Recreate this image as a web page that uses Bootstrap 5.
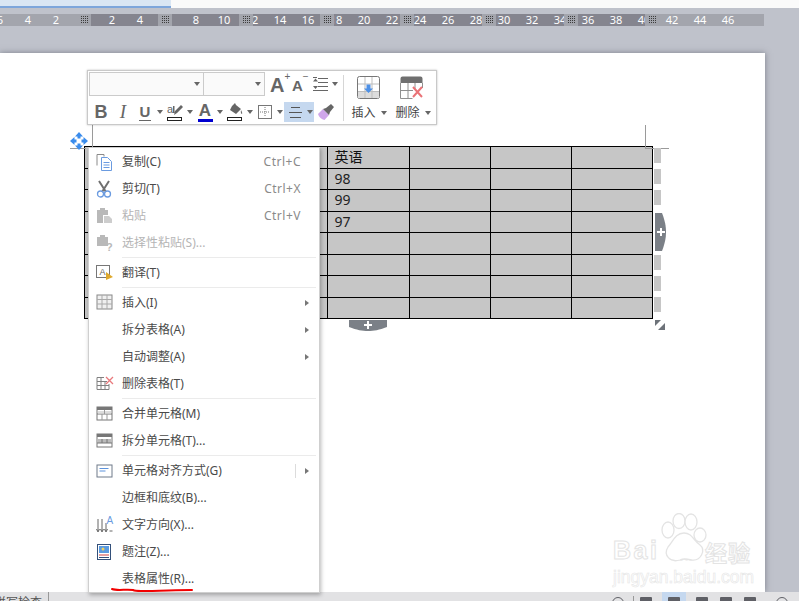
<!DOCTYPE html>
<html lang="zh">
<head>
  <meta charset="UTF-8">
  <title>表格属性</title>
  <link href="https://cdn.jsdelivr.net/npm/bootstrap@5.3.0/dist/css/bootstrap.min.css" rel="stylesheet">
  <style>
    html, body { height: 601px; overflow: hidden; }
    body { background: #bfc2cb; font-family: "Noto Sans", "Noto Sans CJK SC", sans-serif; font-size: 12px; color: #444; }
    .shell { width: 799px; height: 601px; position: relative; overflow: hidden; }

    .tab-strip { height: 8px; background: #fafafa; }
    .doc-tab { width: 171px; height: 8px; background: #dae6f3; border-bottom: 2px solid #7ea6db; }

    .ruler { height: 12px; width: 764px; margin-top: 6px; position: relative; background: #a3a5ad; }
    .ruler-seg { height: 12px; }
    .seg-dark { background: #85858f; }
    .ruler-dots { width: 14px; height: 12px; background: #a3a5ad; position: relative; z-index: 2; display: flex; align-items: center; justify-content: center; }
    .ruler-dots i { display: block; width: 8px; height: 8px; background: conic-gradient(#3c3c3c 25%, transparent 0) 0 0 / 2px 2px; }
    .ruler-nums { position: absolute; left: -14px; top: 0; height: 12px; z-index: 1; color: #fff; font: 11px/12px "Noto Sans", sans-serif; }
    .ruler-nums span { width: 28px; text-align: center; flex: none; }

    .doc-area { flex: 1 1 auto; min-height: 0; padding-top: 27px; padding-right: 34px; }
    .doc-page { height: 100%; background: #fff; box-shadow: 0 0 6px rgba(70,72,85,.55); padding: 93px 0 0 84px; }

    .doc-grid { width: 569px; margin: 0; table-layout: fixed; --bs-table-bg: #c6c6c6; --bs-table-border-color: #000; --bs-border-width: 1px; font: 14px/19px "Noto Sans", "Noto Sans CJK SC", sans-serif; color: #222; }
    .doc-grid td { padding: 0 0 0 6px; height: 21.5px; vertical-align: top; }
    .doc-grid tr:first-child td { border-top-color: #777; color: #111; }

    .status-bar { height: 9px; background: #e2e2e4; overflow: hidden; flex: none; }
    .status-text { margin-left: -6px; padding-top: 3px; width: 55px; line-height: 16px; color: #555; border-right: 1px solid #999; white-space: nowrap; }
    .status-icons { margin-left: auto; padding-right: 5px; }
    .status-cell { width: 24px; height: 9px; display: flex; justify-content: center; padding-top: 5px; }
    .status-cell.is-on { background: #c5d8ef; }
    .status-cell.pushed { margin-left: 4px; }
    .status-cell.pushed-far { margin-left: 8px; }
    .status-cell b { display: block; width: 12px; height: 10px; background: #5f6066; border-radius: 1px; }
    .status-cell b.round { width: 12px; height: 12px; border-radius: 50%; background: none; border: 1.5px solid #5f6066; }
    .status-sep { width: 1px; height: 5px; margin: 4px 0 0 3px; background: #999; }

    .float-bar { position: absolute; left: 87px; top: 70px; width: 350px; height: 55px; background: #fff; border: 1px solid #c9c9c9; box-shadow: 0 0 2px rgba(0,0,0,.25); padding: 1px; display: flex; z-index: 5; }
    .bar-left { width: 250px; flex: none; }
    .font-box { height: 24px; border: 1px solid #cbcbcb; background: #fafafa; display: flex; align-items: center; justify-content: flex-end; padding-right: 3px; }
    .font-name { width: 117px; }
    .font-size { width: 62px; border-left: 0; }
    .down-tri { display: block; width: 0; height: 0; border-left: 3.5px solid transparent; border-right: 3.5px solid transparent; border-top: 4px solid #666; flex: none; }
    .bar-cell { width: 22px; height: 20px; display: flex; align-items: center; justify-content: center; flex: none; color: #666; }
    .tri-cell { width: 8px; height: 20px; display: flex; align-items: center; justify-content: center; flex: none; }
    .bar-on { background: #c5d8ef; }
    .tool-row { margin-top: 6px; margin-left: 1px; }
    .glyph-b { font: bold 18px/20px "Liberation Sans", sans-serif; }
    .glyph-i { font: italic 19px/20px "Liberation Serif", serif; }
    .glyph-u { font: bold 15px/16px "Liberation Sans", sans-serif; border-bottom: 1px solid #666; height: 17px; padding: 0 1px; }
    .glyph-a { font: bold 17px/17px "Liberation Sans", sans-serif; }
    .size-up, .size-down { height: 24px; display: flex; color: #666; font-family: "Liberation Sans", sans-serif; font-weight: bold; flex: none; }
    .size-up { width: 24px; padding-left: 5px; font-size: 20px; line-height: 27px; }
    .size-down { width: 20px; padding-left: 3px; font-size: 15px; line-height: 28px; }
    .size-up small, .size-down small { font-size: 10px; line-height: 10px; font-weight: normal; }
    .bar-line { width: 1px; height: 46px; background: #d6d6d6; margin: 3px 2px 0 4px; flex: none; }
    .bar-big { width: 44px; flex: none; display: flex; flex-direction: column; align-items: center; padding-top: 4px; }
    .bar-big .big-label { display: flex; align-items: center; gap: 5px; margin-top: 5px; padding-left: 2px; line-height: 18px; color: #444; }

    .ctx-menu.dropdown-menu { position: absolute; left: 88px; top: 147px; width: 232px; height: 446px; padding: 0; margin: 0; border: 1px solid #cfcfcf; border-radius: 0; box-shadow: 1px 2px 4px rgba(0,0,0,.28); background: #fff; font-size: 12px; z-index: 4; }
    .ctx-menu .dropdown-item { height: 27px; padding: 0 4px 0 7px; display: flex; align-items: center; color: #4a4a4a; font-size: 12px; line-height: 16px; }
    .ctx-menu .dropdown-item.disabled { color: #b5b5b5; }
    .ctx-menu .dropdown-divider { height: 1px; margin: 1px 3px 1px 33px; border-top: 1px solid #ebebeb; opacity: 1; }
    .item-icon { width: 18px; height: 18px; flex: none; margin-right: 8px; display: block; }
    .item-keys { margin-left: auto; margin-right: 14px; color: #8a8a8a; font-size: 12px; letter-spacing: .5px; }
    .item-more { margin-left: auto; width: 0; height: 0; border-top: 3.5px solid transparent; border-bottom: 3.5px solid transparent; border-left: 4px solid #777; margin-right: 6px; }
    .item-rule { margin-left: auto; margin-right: 9px; width: 1px; height: 14px; background: #dcdcdc; }
    .item-rule + .item-more { margin-left: 0; }

    .grip-col { position: absolute; left: 654px; top: 148px; width: 7px; height: 166px; gap: 6px; z-index: 2; }
    .grip-col i { display: block; width: 7px; height: 15px; background: #c6c6c6; flex: none; }
    .grip-col .grip-gap { background: transparent; height: 38px; }
    .over-svg { position: absolute; z-index: 3; display: block; }
    .mark-line { position: absolute; background: #9a9a9a; z-index: 2; }

    .wm-box { position: absolute; left: 610px; top: 512px; width: 150px; height: 76px; z-index: 1; }
    .wm-bai, .wm-cn, .wm-du, .wm-url { position: absolute; color: #fff; white-space: nowrap; }
    .wm-bai { left: 3px; top: 23px; font: bold 25px/30px "Liberation Sans", sans-serif; letter-spacing: 2.5px; -webkit-text-stroke: 1px #e4e4e4; }
    .wm-du { left: 64px; top: 33px; font: bold 15px/20px "Liberation Sans", sans-serif; -webkit-text-stroke: 1px #e4e4e4; }
    .wm-cn { left: 95px; top: 24px; font: bold 22px/30px "Noto Sans CJK SC", sans-serif; letter-spacing: 1px; -webkit-text-stroke: 1px #e4e4e4; }
    .wm-url { left: 3px; top: 54px; font: 17.5px/22px "Liberation Sans", sans-serif; -webkit-text-stroke: .6px #e6e6e6; }
  </style>
</head>
<body>
<div class="shell d-flex flex-column">
  <div class="tab-strip"><div class="doc-tab"></div></div>

  <div class="ruler">
    <div class="d-flex">
      <div class="ruler-seg" style="width:77px"></div><div class="ruler-dots"><i></i></div>
      <div class="ruler-seg seg-dark" style="width:67px"></div><div class="ruler-dots"><i></i></div>
      <div class="ruler-seg seg-dark" style="width:67px"></div><div class="ruler-dots"><i></i></div>
      <div class="ruler-seg seg-dark" style="width:67px"></div><div class="ruler-dots"><i></i></div>
      <div class="ruler-seg seg-dark" style="width:66px"></div><div class="ruler-dots"><i></i></div>
      <div class="ruler-seg seg-dark" style="width:68px"></div><div class="ruler-dots"><i></i></div>
      <div class="ruler-seg seg-dark" style="width:68px"></div><div class="ruler-dots"><i></i></div>
      <div class="ruler-seg seg-dark" style="width:67px"></div><div class="ruler-dots"><i></i></div>
    </div>
    <div class="ruler-nums d-flex">
      <span>6</span><span>4</span><span>2</span><span></span><span>2</span><span>4</span><span></span><span>8</span><span>10</span><span>12</span><span>14</span><span>16</span><span>18</span><span>20</span><span>22</span><span>24</span><span>26</span><span>28</span><span>30</span><span>32</span><span>34</span><span>36</span><span>38</span><span>40</span><span>42</span><span>44</span><span>46</span>
    </div>
  </div>

  <div class="doc-area">
    <div class="doc-page">
      <table class="table table-bordered doc-grid">
        <tbody>
          <tr><td></td><td></td><td></td><td>英语</td><td></td><td></td><td></td></tr>
          <tr><td></td><td></td><td></td><td>98</td><td></td><td></td><td></td></tr>
          <tr><td></td><td></td><td></td><td>99</td><td></td><td></td><td></td></tr>
          <tr><td></td><td></td><td></td><td>97</td><td></td><td></td><td></td></tr>
          <tr><td></td><td></td><td></td><td></td><td></td><td></td><td></td></tr>
          <tr><td></td><td></td><td></td><td></td><td></td><td></td><td></td></tr>
          <tr><td></td><td></td><td></td><td></td><td></td><td></td><td></td></tr>
          <tr><td></td><td></td><td></td><td></td><td></td><td></td><td></td></tr>
        </tbody>
      </table>
    </div>
  </div>

  <div class="status-bar d-flex">
    <div class="status-text">拼写检查</div>
    <div class="status-icons d-flex">
      <div class="status-cell"><b class="round"></b></div>
      <div class="status-sep"></div>
      <div class="status-cell"><b></b></div>
      <div class="status-cell pushed is-on"><b></b></div>
      <div class="status-cell pushed"><b></b></div>
      <div class="status-cell"><b></b></div>
      <div class="status-cell"><b></b></div>
      <div class="status-cell pushed-far"><b class="round"></b></div>
    </div>
  </div>

  <!-- 文档上的标记 -->
  <div class="mark-line" style="left:70px;top:148px;width:16px;height:1px"></div>
  <div class="mark-line" style="left:92px;top:125px;width:1px;height:22px"></div>
  <div class="mark-line" style="left:645px;top:125px;width:1px;height:23px"></div>
  <div class="mark-line" style="left:645px;top:148px;width:24px;height:1px"></div>

  <svg class="over-svg" style="left:70px;top:132px" width="18" height="18" viewBox="0 0 18 18" fill="#3a8cec">
    <path d="M9 0l4 4.500h-2.500v2h-3v-2H5zM9 18l-4-4.500h2.500v-2h3v2H13zM0 9l4.500-4v2.500h2v3h-2V13zM18 9l-4.500 4v-2.500h-2v-3h2V5z"/>
  </svg>

  <div class="grip-col d-flex flex-column">
    <i></i><i></i><i></i><i class="grip-gap"></i><i></i><i></i><i></i>
  </div>
  <svg class="over-svg" style="left:655px;top:213px" width="12" height="38" viewBox="0 0 12 38">
    <path d="M0 0h7c3 8 4 13 4 19s-1 11-4 19H0z" fill="#7b8087"/>
    <path d="M5 15h2v3h3v2H7v3H5v-3H2v-2h3z" fill="#fff"/>
  </svg>
  <svg class="over-svg" style="left:349px;top:320px" width="38" height="12" viewBox="0 0 38 12">
    <path d="M0 0h38v7c-8 3-13 4-19 4S8 10 0 7z" fill="#7b8087"/>
    <path d="M18 1h2v3h3v2h-3v3h-2V6h-3V4h3z" fill="#fff"/>
  </svg>
  <svg class="over-svg" style="left:655px;top:320px" width="10" height="10" viewBox="0 0 10 10">
    <path d="M0 0h6L0 6z" fill="#6d7279"/><path d="M10 3v7H3z" fill="#6d7279"/>
  </svg>

  <!-- 百度经验水印 -->
  <div class="wm-box">
    <svg class="over-svg" style="left:50px;top:1px" width="48" height="50" viewBox="0 0 48 50" fill="#fff" stroke="#e4e4e4" stroke-width="1.300">
      <ellipse cx="8" cy="17" rx="6" ry="8"/><ellipse cx="19" cy="8" rx="6" ry="7.500"/><ellipse cx="31" cy="9" rx="6" ry="8"/><ellipse cx="40" cy="22" rx="6" ry="7"/>
      <path d="M24 20c8 0 9 7 16 12 6 5 1 16-8 15-5-1-8-2-12 0-10 3-17-5-12-13 5-5 7-14 16-14z"/>
    </svg>
    <span class="wm-bai">Bai</span>
    <span class="wm-du">du</span>
    <span class="wm-cn">经验</span>
    <span class="wm-url">jingyan.baidu.com</span>
  </div>

  <!-- 浮动工具栏 -->
  <div class="float-bar">
    <div class="bar-left">
      <div class="d-flex">
        <div class="font-box font-name"><span class="down-tri"></span></div>
        <div class="font-box font-size"><span class="down-tri"></span></div>
        <div class="size-up"><span>A</span><small>+</small></div>
        <div class="size-down"><span>A</span><small>−</small></div>
        <div class="bar-cell" style="height:24px">
          <svg width="15" height="14" viewBox="0 0 15 14" stroke="#666" fill="#666"><path d="M5 1.500h10M5 5.500h10M5 9.500h10M0 13.500h15M0 .5h4" fill="none"/><path d="M2.500 1.500l2.500 3H0zM2.500 12l2.500-3H0z" stroke="none"/></svg>
        </div>
        <div class="tri-cell" style="height:24px"><span class="down-tri"></span></div>
      </div>
      <div class="d-flex align-items-center tool-row">
        <div class="bar-cell glyph-b">B</div>
        <div class="bar-cell glyph-i">I</div>
        <div class="bar-cell"><span class="glyph-u">U</span></div><div class="tri-cell"><span class="down-tri"></span></div>
        <div class="bar-cell">
          <svg width="16" height="18" viewBox="0 0 16 18"><text x="0" y="10" font-size="11" fill="#666" font-family="Liberation Sans">a</text><path d="M6 3h1.500v7H6zM7 12l1-4 6-6 2 2-6 6z" fill="#666"/><rect x=".5" y="14.500" width="14" height="3" fill="#fff" stroke="#222"/></svg>
        </div><div class="tri-cell"><span class="down-tri"></span></div>
        <div class="bar-cell">
          <div class="d-flex flex-column align-items-center"><span class="glyph-a">A</span><svg class="d-block" width="15" height="3"><rect width="15" height="3" fill="#0000d0"/></svg></div>
        </div><div class="tri-cell"><span class="down-tri"></span></div>
        <div class="bar-cell">
          <svg width="16" height="18" viewBox="0 0 16 18"><path d="M8 0l1 2 5 4-5 5-6-4 2-4z" fill="#666"/><path d="M14 7c1 2 1.500 3 1 4-1 0-1.500-2-1-4z" fill="#666"/><rect x=".5" y="14.500" width="14" height="3" fill="#fff" stroke="#222"/></svg>
        </div><div class="tri-cell"><span class="down-tri"></span></div>
        <div class="bar-cell">
          <svg width="14" height="14" viewBox="0 0 14 14" fill="none" stroke="#777"><rect x=".5" y=".5" width="13" height="13"/><path d="M7 2v10M2 7h10" stroke-dasharray="1 1"/></svg>
        </div><div class="tri-cell"><span class="down-tri"></span></div>
        <div class="bar-cell bar-on">
          <svg width="13" height="11" viewBox="0 0 13 11" stroke="#555"><path d="M2 .5h9M0 5.500h13M1 10.500h11"/></svg>
        </div><div class="tri-cell bar-on"><span class="down-tri"></span></div>
        <div class="bar-cell">
          <svg width="17" height="17" viewBox="0 0 17 17"><path d="M1 10l5-5 6 6-4.500 5c-3-.5-5.500-3-6.500-6z" fill="#cfa6ea"/><path d="M6 5l3-1 5-4 3 3-4 5-1 3z" fill="#666"/></svg>
        </div>
      </div>
    </div>
    <div class="bar-line"></div>
    <div class="bar-big">
      <svg width="23" height="23" viewBox="0 0 23 23" fill="none"><rect x=".5" y=".5" width="22" height="22" rx="2" stroke="#777"/><rect x="1" y="16" width="21" height="6" fill="#dcdcdc"/><path d="M1 8h21M1 15.500h21M8 1v21M15 1v21" stroke="#bdbdbd"/><path d="M9.500 8.500h4v4h2.500l-4.500 4.500-4.500-4.500h2.500z" fill="#4d90e6"/></svg>
      <div class="big-label">插入<span class="down-tri"></span></div>
    </div>
    <div class="bar-big">
      <svg width="24" height="23" viewBox="0 0 24 23" fill="none"><path d="M.5 7V2.500a2 2 0 0 1 2-2h18a2 2 0 0 1 2 2V7z" fill="#6f6f6f"/><path d="M.5 7v15.500h12M22.500 7v5M1 14.500h12M8 7v15M15 7v6" stroke="#909090"/><path d="M13 11l9 10M22 11l-9 10" stroke="#ea7377" stroke-width="2"/></svg>
      <div class="big-label">删除<span class="down-tri"></span></div>
    </div>
  </div>

  <!-- 右键菜单 -->
  <div class="dropdown-menu d-block ctx-menu">
    <a class="dropdown-item" href="#">
      <svg class="item-icon" viewBox="0 0 18 18" fill="none"><path d="M1 12.500V1.500h7v2" stroke="#8a8a8a"/><path d="M5.500 4.500h6l4 4v9h-10z" fill="#fff" stroke="#6b9be0"/><path d="M7.500 9.500h6M7.500 12h6M7.500 14.500h6" stroke="#6b9be0"/></svg>
      复制(C)<span class="item-keys">Ctrl+C</span>
    </a>
    <a class="dropdown-item" href="#">
      <svg class="item-icon" viewBox="0 0 18 18" fill="none"><path d="M3 1l7 11M13 1L6 12" stroke="#6f6f6f" stroke-width="2"/><circle cx="4.500" cy="14" r="3" stroke="#6b9be0" stroke-width="1.300"/><circle cx="11.500" cy="14" r="3" stroke="#6b9be0" stroke-width="1.300"/></svg>
      剪切(T)<span class="item-keys">Ctrl+X</span>
    </a>
    <a class="dropdown-item disabled" href="#">
      <svg class="item-icon" viewBox="0 0 18 18"><path d="M1 3h3V1h5v2h3v5H7v8H1z" fill="#b9b9b9"/><path d="M8 9h5l3 3v4H8z" fill="#cdcdcd"/></svg>
      粘贴<span class="item-keys">Ctrl+V</span>
    </a>
    <a class="dropdown-item disabled" href="#">
      <svg class="item-icon" viewBox="0 0 18 18"><path d="M1 3h3V1h5v2h3v9H1z" fill="#b9b9b9"/><text x="10" y="17" font-size="11" font-weight="bold" fill="#b9b9b9" font-family="Liberation Sans">?</text></svg>
      选择性粘贴(S)...
    </a>
    <div class="dropdown-divider"></div>
    <a class="dropdown-item" href="#">
      <svg class="item-icon" viewBox="0 0 18 18" fill="none"><rect x=".5" y="1.500" width="13" height="12" stroke="#777"/><text x="3.500" y="11" font-size="9" fill="#666" font-family="Liberation Sans">A</text><path d="M10 8l7 5-7 3z" fill="#dfa92e"/></svg>
      翻译(T)
    </a>
    <div class="dropdown-divider"></div>
    <a class="dropdown-item" href="#">
      <svg class="item-icon" viewBox="0 0 18 18" fill="none"><rect x="1" y="1" width="15" height="14" fill="#f0f0f0" stroke="#888"/><path d="M1 5.500h15M1 10h15M6 1v14M11 1v14" stroke="#aaa"/></svg>
      插入(I)<span class="item-more"></span>
    </a>
    <a class="dropdown-item" href="#"><span class="item-icon"></span>拆分表格(A)<span class="item-more"></span></a>
    <a class="dropdown-item" href="#"><span class="item-icon"></span>自动调整(A)<span class="item-more"></span></a>
    <a class="dropdown-item" href="#">
      <svg class="item-icon" viewBox="0 0 18 18" fill="none"><path d="M8 2.500H1v12h12V9M1 6.500h10M1 10.500h12M5 2.500v12M9 6v8.500" stroke="#808080"/><path d="M10 2l7 7M17 2l-7 7" stroke="#e8797c" stroke-width="1.300"/></svg>
      删除表格(T)
    </a>
    <div class="dropdown-divider"></div>
    <a class="dropdown-item" href="#">
      <svg class="item-icon" viewBox="0 0 18 18" fill="none"><rect x="1" y="2" width="15" height="13" fill="#fff" stroke="#777"/><rect x="1" y="2" width="15" height="3" fill="#777"/><path d="M1 9h15" stroke="#777"/><path d="M2 6h13v2.500H2z" fill="#ddd"/><path d="M6 9v6M11 9v6M8.500 5v4" stroke="#999"/></svg>
      合并单元格(M)
    </a>
    <a class="dropdown-item" href="#">
      <svg class="item-icon" viewBox="0 0 18 18" fill="none"><rect x="1" y="2" width="15" height="13" fill="#fff" stroke="#777"/><rect x="1" y="2" width="15" height="3" fill="#777"/><rect x="2" y="7" width="13" height="4" fill="#bbb"/><path d="M1 11h15M6 7v4M11 7v4" stroke="#777"/></svg>
      拆分单元格(T)...
    </a>
    <div class="dropdown-divider"></div>
    <a class="dropdown-item" href="#">
      <svg class="item-icon" viewBox="0 0 18 18" fill="none"><rect x="1" y="3" width="15" height="12" stroke="#6f7a8a"/><path d="M3.500 6.500h9M3.500 9h6" stroke="#5d93dc"/></svg>
      单元格对齐方式(G)<span class="item-rule"></span><span class="item-more"></span>
    </a>
    <a class="dropdown-item" href="#"><span class="item-icon"></span>边框和底纹(B)...</a>
    <a class="dropdown-item" href="#">
      <svg class="item-icon" viewBox="0 0 18 18" fill="none"><path d="M2 3v12M6 3v12M10 7v8" stroke="#666"/><path d="M.5 13l1.500 3 1.500-3M4.500 13L6 16l1.500-3M8.500 13l1.500 3 1.500-3M13.500 15h3" stroke="#666"/><text x="10.500" y="8" font-size="10" fill="#6b9be0" font-family="Liberation Sans">A</text></svg>
      文字方向(X)...
    </a>
    <a class="dropdown-item" href="#">
      <svg class="item-icon" viewBox="0 0 18 18" fill="none"><rect x="1.500" y="1.500" width="13" height="15" fill="#fff" stroke="#33507a"/><rect x="3" y="3" width="10" height="7" fill="#5a9be0"/><circle cx="7" cy="6" r="1.500" fill="#f0d060"/><path d="M3 12h10" stroke="#d04040"/><path d="M3 14.500h10" stroke="#33507a"/></svg>
      题注(Z)...
    </a>
    <a class="dropdown-item" href="#"><span class="item-icon"></span>表格属性(R)...</a>
  </div>

  <svg class="over-svg" style="left:110px;top:586px;z-index:6" width="86" height="8" viewBox="0 0 86 8" fill="none">
    <path d="M2 3c5 2 14 0 21 1 2 1 5 1 8 1 18 0 35-1 51-1" stroke="#f20000" stroke-width="2" stroke-linecap="round"/>
  </svg>
</div>
<script src="https://cdn.jsdelivr.net/npm/bootstrap@5.3.0/dist/js/bootstrap.bundle.min.js"></script>
</body>
</html>
